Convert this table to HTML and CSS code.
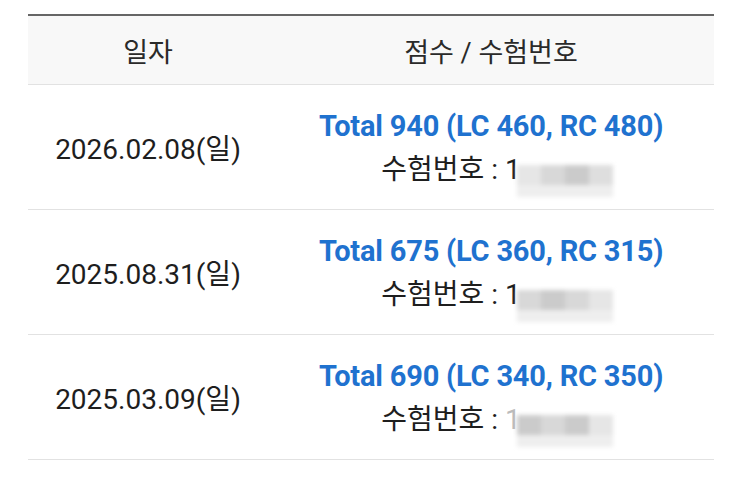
FILE: index.html
```html
<!DOCTYPE html>
<html lang="ko">
<head>
<meta charset="utf-8">
<link rel="stylesheet" href="styles.css">
</head>
<body>
<div class="table">
  <div class="row head">
    <div class="c1">일자</div>
    <div class="c2">점수 / 수험번호</div>
  </div>
  <div class="row">
    <div class="c1 date">2026.02.08(일)</div>
    <div class="c2 cell">
      <div class="score">Total 940 (LC 460, RC 480)</div>
      <div class="num">수험번호 : 1<span class="mask"><i class="b1"></i><i class="b2"></i><i class="b3"></i><i class="b4"></i></span></div>
    </div>
  </div>
  <div class="row">
    <div class="c1 date">2025.08.31(일)</div>
    <div class="c2 cell">
      <div class="score">Total 675 (LC 360, RC 315)</div>
      <div class="num">수험번호 : 1<span class="mask"><i class="b2"></i><i class="b3"></i><i class="b2"></i><i class="b1"></i></span></div>
    </div>
  </div>
  <div class="row">
    <div class="c1 date">2025.03.09(일)</div>
    <div class="c2 cell">
      <div class="score">Total 690 (LC 340, RC 350)</div>
      <div class="num">수험번호 : <span class="faint">1</span><span class="mask"><i class="b3"></i><i class="b2"></i><i class="b3"></i><i class="b1"></i></span></div>
    </div>
  </div>
</div>
</body>
</html>
```

FILE: styles.css
```css
html, body {
  margin: 0;
  padding: 0;
  background: #ffffff;
}
body {
  font-family: Roboto, "Noto Sans CJK KR", sans-serif;
  color: #222;
}
.table {
  margin: 14px 0 0 28px;
  width: 686px;
  border-top: 2px solid #666;
}
.row {
  display: flex;
  height: 124px;
  border-bottom: 1px solid #e2e2e2;
  align-items: center;
}
.row.head {
  height: 68px;
  background: #f8f8f8;
  font-size: 27px;
  color: #2a2a2a;
}
.c1 {
  width: 240px;
  text-align: center;
}
.c2 {
  flex: 1;
  text-align: center;
}
.cell {
  padding-top: 8px;
}
.date {
  font-size: 28px;
  color: #1e1e1e;
}
.score {
  font-size: 29px;
  font-weight: 700;
  color: #1f72cf;
  line-height: 40px;
  letter-spacing: -0.2px;
}
.num {
  font-size: 28px;
  line-height: 40px;
  color: #1e1e1e;
  margin-top: 4px;
  padding-left: 12px;
}
.faint { color: #bbb; }
.mask {
  display: inline-flex;
  vertical-align: -6px;
  height: 32px;
  width: 96px;
  filter: blur(2px);
  background: #eeeeee;
  margin-left: -4px;
}
.mask i {
  flex: 1;
  height: 20px;
}
.b1 { background: #e6e6e6; }
.b2 { background: #d8d8d8; }
.b3 { background: #cbcbcb; }
.b4 { background: #dedede; }
```
